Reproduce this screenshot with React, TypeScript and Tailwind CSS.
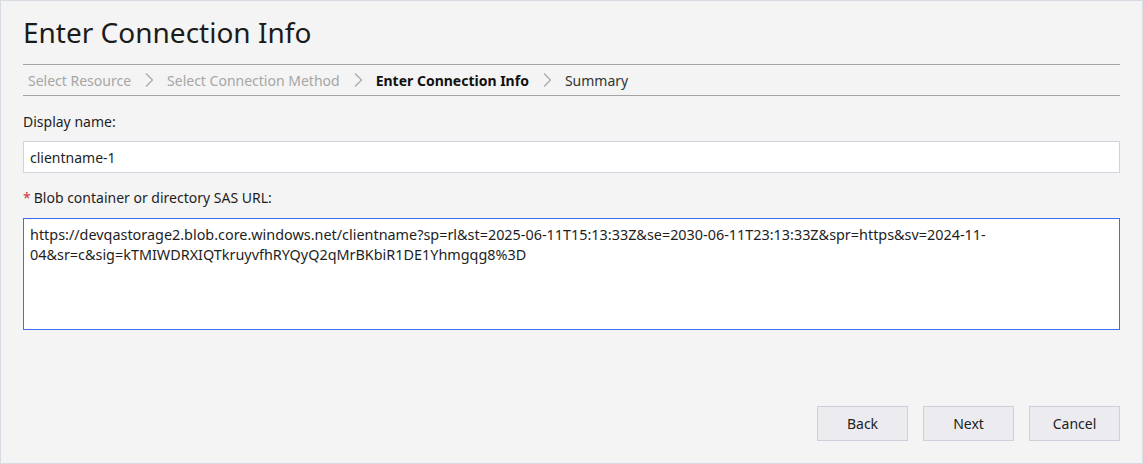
import React from "react";

function Chevron() {
  return (
    <svg width="10" height="16" viewBox="0 0 10 16" className="mx-[13px] shrink-0">
      <path d="M2 1.5 L8.5 8 L2 14.5" fill="none" stroke="#a8a8a8" strokeWidth="1.2" />
    </svg>
  );
}

export default function App() {
  return (
    <div
      className="w-[1143px] h-[464px] bg-[#f4f4f4] border border-[#d8dde3] flex flex-col px-[22px] text-[#1e1e1e]"
      style={{ fontFamily: '"Segoe UI", "Noto Sans", "Open Sans", sans-serif' }}
    >
      <div className="pt-[13px] h-[63px] text-[28px] leading-[36px] text-[#1b1b1b]">Enter Connection Info</div>
      <div className="h-[32px] border-t border-b border-[#a3a3a3] flex items-center pl-[5px] text-[14px]">
        <span className="text-[#a6a6a6]">Select Resource</span>
        <Chevron />
        <span className="text-[#a6a6a6]">Select Connection Method</span>
        <Chevron />
        <span className="font-bold text-[#111]">Enter Connection Info</span>
        <Chevron />
        <span className="text-[#333]">Summary</span>
      </div>
      <div className="mt-[16px] text-[14px] leading-[20px]">Display name:</div>
      <div className="mt-[9px] h-[32px] bg-white border border-[#d2d2dc] flex items-center px-[6px] text-[14px]">
        clientname-1
      </div>
      <div className="mt-[15px] text-[14px] leading-[20px] flex items-center">
        <span className="text-[#d13438] mr-[3px]">*</span>Blob container or directory SAS URL:
      </div>
      <div className="mt-[10px] h-[112px] bg-white border border-[#3f6ff0] px-[6px] pt-[6px] text-[14.4px] leading-[20px] whitespace-pre">
        <div>https://devqastorage2.blob.core.windows.net/clientname?sp=rl&amp;st=2025-06-11T15:13:33Z&amp;se=2030-06-11T23:13:33Z&amp;spr=https&amp;sv=2024-11-</div>
        <div>04&amp;sr=c&amp;sig=kTMIWDRXIQTkruyvfhRYQyQ2qMrBKbiR1DE1Yhmgqg8%3D</div>
      </div>
      <div className="flex-1" />
      <div className="flex justify-end gap-[15px] mb-[22px]">
        {["Back", "Next", "Cancel"].map((t) => (
          <div
            key={t}
            className="w-[91px] h-[35px] bg-[#ececf0] border border-[#cfcfdc] flex items-center justify-center text-[14px] text-[#222]"
          >
            {t}
          </div>
        ))}
      </div>
    </div>
  );
}
